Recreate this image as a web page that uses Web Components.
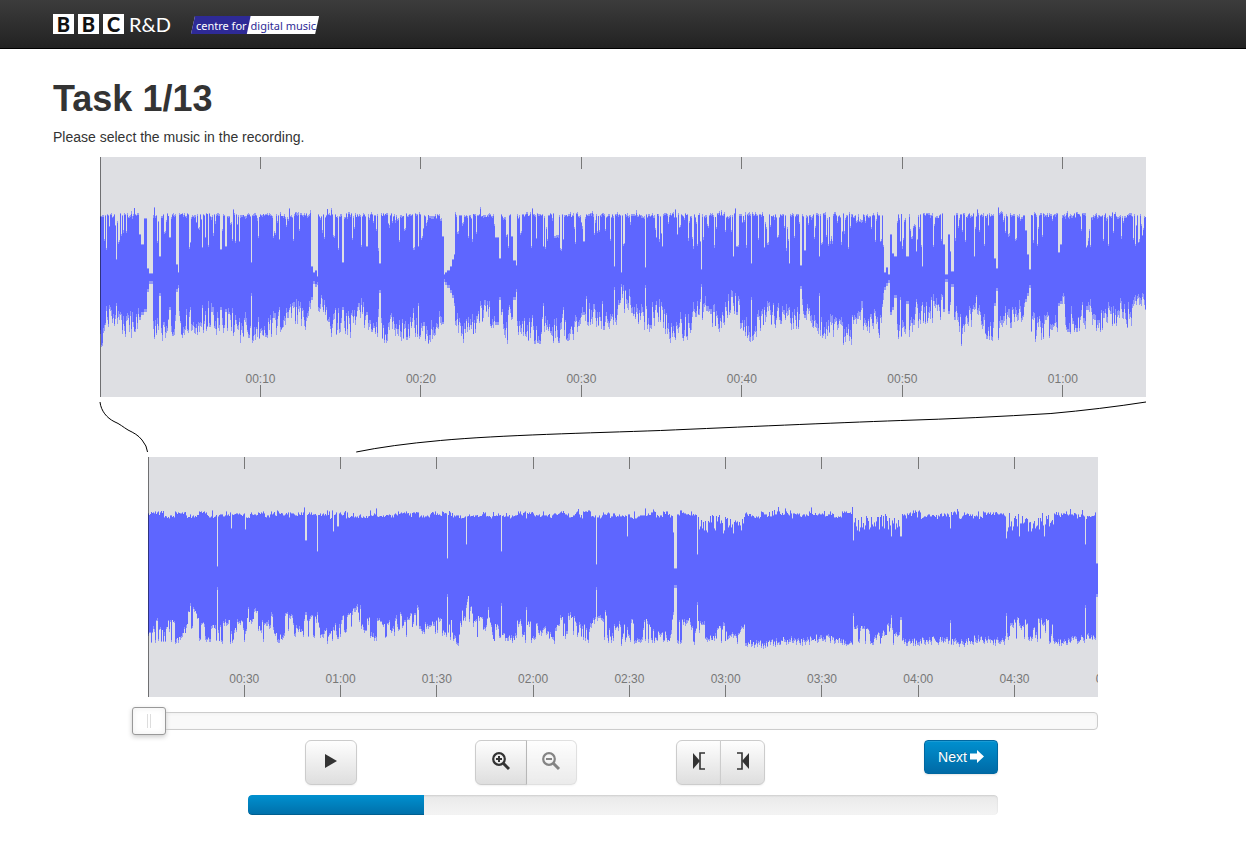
<!DOCTYPE html>
<html lang="en">
<head>
<meta charset="utf-8">
<title>Task 1/13</title>
<meta name="viewport" content="width=device-width, initial-scale=1">
<style>
  body { margin: 0; background: #fff; color: #333; font: 14px/20px "Liberation Sans", Arial, sans-serif; }
</style>
</head>
<body>
<task-page></task-page>

<template id="tpl-page">
  <style>
    :host { display: block; }
    main { max-width: 1140px; margin: 0 auto; padding: 30px 16px 0; }
    h1 { margin: 0; font-size: 36px; line-height: 40px; font-weight: bold; color: #333; }
    p { margin: 8px 0 10px; color: #333; }
    .zoomed { display: block; max-width: 1046px; margin: 0 auto; }
    .whole { display: block; max-width: 950px; margin: 0 auto; }
    .panel { max-width: 750px; margin: 10px auto 0; }
  </style>
  <site-bar></site-bar>
  <main>
    <h1>Task 1/13</h1>
    <p>Please select the music in the recording.</p>
    <div class="zoomed">
      <wave-view kind="zoomed" span="65.18" step="10" label="Zoomed waveform"></wave-view>
      <zoom-link></zoom-link>
    </div>
    <div class="whole">
      <wave-view kind="whole" span="296" step="30" label="Whole recording"></wave-view>
      <scroll-slider></scroll-slider>
    </div>
    <div class="panel">
      <player-controls></player-controls>
      <task-progress value="176" max="750"></task-progress>
    </div>
  </main>
</template>

<template id="tpl-bar">
  <style>
    :host { display: block; background: linear-gradient(#3c3c3c, #222); border-bottom: 1px solid #000; }
    nav { display: flex; align-items: flex-start; gap: 20px; max-width: 1140px; height: 48px; margin: 0 auto; padding: 0 16px; }
    a { text-decoration: none; display: flex; }
    .bbc { gap: 4px; margin-top: 14px; color: #fff; }
    .bbc b { width: 21px; height: 20px; background: #fff; color: #111; font: 900 20px/20px Lato, sans-serif; text-align: center; }
    .bbc span { margin-left: 1px; font: 20px/20px Lato, sans-serif; }
    .cdm { margin-top: 16px; font: 11px/18px "Noto Sans", sans-serif; height: 18px;
      clip-path: polygon(4px 0, 100% 0, calc(100% - 4px) 100%, 0 100%); background: #fff; }
    .cdm span { color: #fff; background: #2e2a96; padding: 1px 4px 0 5px; height: 18px;
      clip-path: polygon(0 0, 100% 0, calc(100% - 4px) 100%, 0 100%); white-space: nowrap; }
    .cdm i { font-style: normal; color: #2e2a96; padding: 1px 3px 0 0; white-space: nowrap; }
  </style>
  <nav>
    <a class="bbc" href="#"><b>B</b><b>B</b><b>C</b><span>R&amp;D</span></a>
    <a class="cdm" href="#"><span>centre for</span><i>digital music</i></a>
  </nav>
</template>

<template id="tpl-wave">
  <style>
    :host { display: grid; height: 240px; background: #dedfe3; overflow: hidden; }
    svg, .scale { grid-area: 1 / 1; width: 100%; height: 240px; min-width: 0; display: block; }
    .scale { display: flex; box-sizing: border-box; }
    .mark { flex: none; display: flex; flex-direction: column; justify-content: space-between; align-items: center;
      font-size: 12px; line-height: 12px; color: #777; }
    .mark::before, .foot::after { content: ""; width: 1px; height: 12px; background: #777; }
    .foot { display: flex; flex-direction: column; align-items: center; }
  </style>
  <svg viewBox="0 0 100 240" preserveAspectRatio="none" role="img">
    <path class="soft" fill="#9299f7"></path>
    <path class="solid" fill="#5e66ff"></path>
    <path class="head" d="M0 0H1V240H0z" fill="#000" fill-opacity=".5"></path>
  </svg>
  <div class="scale"></div>
</template>

<template id="tpl-link">
  <style>
    :host { display: block; padding: 5px 0; }
    svg { display: block; width: 100%; height: 50px; overflow: visible; }
    path { fill: none; stroke: #000; vector-effect: non-scaling-stroke; }
  </style>
  <svg viewBox="0 0 1045 50" preserveAspectRatio="none" aria-hidden="true">
    <path d="M0 0C1 9 7 16 14 19.500C20 22 23 25 28 28C34 31 38 33 42 38Q47 44 47.500 50"/>
    <path d="M256 50Q290 43 340 38.500C400 33 490 31 560 28.500C640 25 730 21 800 18.500C850 17 900 14.500 950 11.500Q1000 7 1045 0"/>
  </svg>
</template>

<template id="tpl-slider">
  <style>
    :host { display: block; box-sizing: border-box; height: 18px; margin-top: 15px; background: #f9f9f9;
      border: 1px solid #ccc; border-radius: 4px; box-shadow: inset 0 1px 3px #f0f0f0; }
    input { -webkit-appearance: none; appearance: none; display: block; box-sizing: border-box;
      width: calc(100% + 34px); height: 28px; margin: -6px -17px; background: none; }
    input::-webkit-slider-runnable-track { height: 28px; background: none; }
    input::-webkit-slider-thumb { -webkit-appearance: none; box-sizing: border-box; width: 34px; height: 28px;
      border: 1px solid #999; border-radius: 3px;
      background:
        linear-gradient(#ddd, #ddd) 14px 6px / 1px 14px no-repeat,
        linear-gradient(#ddd, #ddd) 17px 6px / 1px 14px no-repeat, #fff;
      box-shadow: 0 2px 5px #ccc, inset 0 0 6px #eee; }
  </style>
  <input type="range" min="0" max="100" value="0" aria-label="Scroll position">
</template>

<template id="tpl-controls">
  <style>
    :host { display: grid; grid-template-columns: repeat(4, 1fr); column-gap: 30px; align-items: start; justify-items: center; }
    .group { display: flex; }
    button { box-sizing: border-box; margin: 0; height: 45px; padding: 0 0 3px; display: flex; align-items: center; justify-content: center;
      border: 1px solid #ccc; border-radius: 6px; background: linear-gradient(#fefefe, #dedede); color: #333;
      box-shadow: 0 1px 2px rgba(0,0,0,.06); font: inherit; }
    button svg { display: block; }
    .wide { width: 52px; }
    .slim { width: 45px; }
    .group button:first-child { border-radius: 6px 0 0 6px; }
    .group button:last-child { border-radius: 0 6px 6px 0; margin-left: -1px; }
    button:disabled { opacity: .6; border-left-color: #aaa; width: 51px; }
    .next { justify-self: end; width: 74px; height: 34px; padding: 0; gap: 3px; color: #fff; border-color: #0067a0; border-radius: 4px;
      background: linear-gradient(#0090cf, #006aa6); box-shadow: inset 0 1px #1a9bd4, 0 1px 2px rgba(0,0,0,.1);
      text-shadow: 0 -1px rgba(0,0,0,.25); }
  </style>
  <button class="wide" aria-label="Play"><svg width="12" height="14" viewBox="0 0 12 14"><path d="M0 0L12 7L0 14z" fill="#333"/></svg></button>
  <div class="group">
    <button class="wide" aria-label="Zoom in"><svg width="20" height="20" viewBox="0 0 20 20" fill="none" stroke="#333">
      <circle cx="8" cy="8" r="5.800" stroke-width="2.200"/><path d="M5 8H11M8 5V11" stroke-width="2"/><path d="M12.500 12.500L18 18" stroke-width="3"/></svg></button>
    <button class="wide" disabled aria-label="Zoom out"><svg width="20" height="20" viewBox="0 0 20 20" fill="none" stroke="#333">
      <circle cx="8" cy="8" r="5.800" stroke-width="2.200"/><path d="M5 8H11" stroke-width="2"/><path d="M12.500 12.500L18 18" stroke-width="3"/></svg></button>
  </div>
  <div class="group">
    <button class="slim" aria-label="Mark start"><svg width="12" height="18" viewBox="0 0 12 18"><path d="M0 1L7 9L0 17z" fill="#333"/><path d="M12 1H7V17H12" fill="none" stroke="#333" stroke-width="1.600"/></svg></button>
    <button class="slim" aria-label="Mark end"><svg width="12" height="18" viewBox="0 0 12 18"><path d="M12 1L5 9L12 17z" fill="#333"/><path d="M0 1H5V17H0" fill="none" stroke="#333" stroke-width="1.600"/></svg></button>
  </div>
  <button class="next">Next<svg width="14" height="14" viewBox="0 0 14 14" aria-hidden="true"><path d="M0 3.500H7V0L14 6.500L7 13V9.500H0z" fill="#fff"/></svg></button>
</template>

<template id="tpl-progress">
  <style>
    :host { display: block; margin-top: 10px; }
    progress { -webkit-appearance: none; appearance: none; display: block; width: 100%; height: 20px; border: 0;
      border-radius: 4px; overflow: hidden; }
    progress::-webkit-progress-bar { background: linear-gradient(#e9e9e9, #f4f4f4); border-radius: 4px; box-shadow: inset 0 1px 2px rgba(0,0,0,.12); }
    progress::-webkit-progress-value { background: linear-gradient(#0090cf, #006fa9); box-shadow: inset 0 -1px rgba(0,0,0,.15); border-radius: 4px 0 0 4px; }
  </style>
  <progress aria-label="Tasks completed"></progress>
</template>

<script>
// Signal outlines. "gaps" are quiet stretches: [start, end, top, bottom];
// "low" is the reach of the negative peaks as x, y pairs; "rough" lists stretches with uneven crests.
const SIGNALS = {
  zoomed: {
    width: 1046, seed: 7, depth: 28, crest: 36,
    gaps: [[16,17,103,146],[39,41,78,160],[41,44,88,155],[44,47,62,152],[47,49,112,132],[49,53,117,124],[59,61,100,136],[69,71,81,150],[76,78,108,132],[78,79,116,128],
      [90,91,86,150],[102,103,91,148],[120,122,93,150],[125,127,90,152],[151,152,106,136],[179,180,83,150],[211,213,110,140],[213,215,116,124],[215,217,114,127],[217,218,120,125],
      [242,244,106,150],[266,268,90,155],[279,281,107,133],[318,319,90,146],[342,344,80,165],[344,345,118,122],[345,347,116,125],[347,350,114,128],[350,352,110,133],[352,354,103,138],[354,355,98,146],
      [395,399,81,165],[399,401,102,140],[411,413,80,160],[413,416,104,140],[416,417,109,132],[443,444,90,146],[463,464,83,150],[483,485,85,155],[514,515,110,130],[521,522,116,127],
      [545,546,111,128],[562,563,90,150],[601,602,113,127],[633,634,100,146],[636,638,90,155],[651,652,107,140],[664,665,91,150],[689,690,107,150],[700,702,109,129],[704,706,94,158],
      [719,720,100,136],[784,786,116,130],[786,788,111,126],[788,790,118,123],[790,792,78,155],[792,794,97,150],[794,797,100,138],[800,801,85,140],[806,809,100,144],[816,817,95,142],[822,823,110,145],
      [843,845,88,152],[845,848,118,122],[848,850,78,154],[850,851,95,145],[851,854,115,127],[874,875,100,150],[894,896,102,146],[896,898,112,131],[925,927,74,142],[927,929,98,136],[929,931,113,128],[958,960,96,146],[960,962,88,144]],
    low: [0,190,4,184,8,168,20,178,30,180,40,170,46,160,55,186,65,185,75,175,80,181,90,172,100,178,110,168,118,178,130,170,137,187,147,178,152,184,165,180,180,174,190,163,205,174,210,150,220,157,230,178,250,180,258,165,270,172,283,184,300,183,316,178,328,186,342,165,355,166,362,184,372,180,380,165,402,174,407,185,412,160,418,184,445,185,460,184,477,180,482,165,502,170,512,177,520,155,530,152,545,177,560,165,570,184,588,181,600,160,620,174,632,150,640,170,652,186,662,170,683,168,693,175,704,168,720,178,745,187,755,185,758,167,770,177,780,180,785,150,797,182,807,180,820,168,843,160,855,172,861,187,877,160,886,180,897,183,905,165,915,174,925,155,932,178,937,186,956,175,962,160,968,176,990,168,1000,174,1020,165,1027,172,1045,154],
    rough: []
  },
  whole: {
    width: 950, seed: 23, depth: 25, crest: 3,
    gaps: [[42,43,58,146],[69,70,110,130],[83,84,72,174],[97,98,73,174],[106,107,58,152],[157,159,84,155],[169,170,95,155],[185,186,75,170],[189,191,70,180],[299,300,102,137],[318,319,88,148],
      [340,341,60,150],[353,354,95,146],[378,379,62,150],[448,449,108,130],[479,480,80,170],[525,526,76,155],[526,529,112,128],[549,550,98,145],[705,706,84,156],[743,744,80,158],[752,754,80,160],
      [802,803,72,163],[858,859,82,156],[871,872,80,166],[896,897,80,165],[937,938,88,148],[948,950,107,137]],
    low: [0,190,5,184,30,186,42,170,50,182,68,185,95,186,103,165,115,184,125,174,130,186,140,174,150,187,165,178,171,188,190,180,210,166,220,180,242,187,250,174,256,182,270,168,276,185,290,174,310,187,316,162,322,164,325,187,340,168,344,188,365,185,405,186,425,176,440,184,448,174,455,176,456,195,457,178,460,184,477,188,490,184,525,184,532,185,560,187,580,184,600,188,620,190,645,184,651,188,675,182,698,189,715,185,750,188,780,186,818,188,830,184,850,187,870,182,890,183,907,188,936,184,947,182],
    rough: [[549,597],[705,753],[858,906]]
  }
};

// Small repeatable generator, so a recording always shows the same shape.
const random = seed => () => {
  seed = (seed * 1664525 + 1013904223) >>> 0;
  return seed / 4294967296;
};

const levelAt = (pairs, x) => {
  let i = 0;
  while (i + 2 < pairs.length - 2 && pairs[i + 2] < x) i += 2;
  const t = Math.min(1, Math.max(0, (x - pairs[i]) / (pairs[i + 2] - pairs[i])));
  return pairs[i + 1] + t * (pairs[i + 3] - pairs[i + 1]);
};

function outline(signal) {
  const next = random(signal.seed);
  const zoomed = signal.crest > 10;
  let solid = '', soft = '', swell = 0, dip = 0, crestLift = 0;
  for (let x = 0; x < signal.width; x++) {
    const a = next(), b = next(), c = next(), d = next();
    const rough = signal.rough.some(r => x >= r[0] && x < r[1]);
    const busy = zoomed || x < 590 || rough;
    if (b < .4) swell = d;
    if (c < .8) dip = a > .6 ? d * d * signal.crest : b * 4;
    if (d < .25) crestLift = a * 5 - 2;
    let top = 56 + a * 3;
    if (zoomed) top += dip;
    else top += crestLift;
    if (rough) top += c * 18;
    if (b < .03) top -= 5;
    const reach = levelAt(signal.low, x);
    const spread = zoomed ? .35 * swell + .65 * d : .8 * swell + .2 * d;
    let bottom = reach - (busy ? signal.depth * spread * (a > .12 ? 1 : .1) : d * 7);
    let edge = zoomed ? (a + c) * 5 : c * 4;
    for (const g of signal.gaps) if (x >= g[0] && x < g[1]) { top = g[2]; bottom = g[3]; edge = 3; }
    top = Math.round(top); bottom = Math.round(bottom);
    solid += `M${x} ${top}h1V${bottom}h-1z`;
    soft += `M${x} ${top - Math.round(edge / 3)}h1V${Math.round(Math.min(bottom + edge, reach + 2))}h-1z`;
  }
  return { solid, soft };
}

class Templated extends HTMLElement {
  constructor() {
    super();
    this.attachShadow({ mode: 'open' })
      .append(document.getElementById(this.constructor.template).content.cloneNode(true));
  }
}

class SiteBar extends Templated { static template = 'tpl-bar'; }
class ZoomLink extends Templated { static template = 'tpl-link'; }
class ScrollSlider extends Templated { static template = 'tpl-slider'; }
class PlayerControls extends Templated { static template = 'tpl-controls'; }

class TaskProgress extends Templated {
  static template = 'tpl-progress';
  connectedCallback() {
    const bar = this.shadowRoot.querySelector('progress');
    bar.max = Number(this.getAttribute('max'));
    bar.value = Number(this.getAttribute('value'));
  }
}

class WaveView extends Templated {
  static template = 'tpl-wave';
  connectedCallback() {
    const root = this.shadowRoot;
    const signal = SIGNALS[this.getAttribute('kind')];
    const svg = root.querySelector('svg');
    svg.setAttribute('viewBox', `0 0 ${signal.width} 240`);
    svg.setAttribute('aria-label', this.getAttribute('label'));
    svg.setAttribute('shape-rendering', 'crispEdges');
    const shape = outline(signal);
    root.querySelector('.solid').setAttribute('d', shape.solid);
    root.querySelector('.soft').setAttribute('d', shape.soft);

    // Each mark is one step wide and centred on its time; the row starts half a step in.
    const span = Number(this.getAttribute('span')), step = Number(this.getAttribute('step'));
    const scale = root.querySelector('.scale');
    scale.style.paddingLeft = step / span * 50 + '%';
    scale.style.width = 100 + step / span * 50 + '%';
    const track = document.createElement('div');
    track.style.cssText = 'display:flex;width:100%';
    // A label that starts inside the view is kept even when its centre is just past the end.
    for (let s = step; s < span + step * .15; s += step) {
      const mark = document.createElement('div');
      mark.className = 'mark';
      mark.style.width = step / span * 100 + '%';
      const foot = document.createElement('div');
      foot.className = 'foot';
      const text = document.createElement('span');
      text.textContent = [Math.floor(s / 60), s % 60].map(n => String(n).padStart(2, '0')).join(':');
      foot.append(text);
      mark.append(foot);
      track.append(mark);
    }
    scale.replaceChildren(track);
  }
}

class TaskPage extends Templated { static template = 'tpl-page'; }

customElements.define('site-bar', SiteBar);
customElements.define('zoom-link', ZoomLink);
customElements.define('scroll-slider', ScrollSlider);
customElements.define('player-controls', PlayerControls);
customElements.define('task-progress', TaskProgress);
customElements.define('wave-view', WaveView);
customElements.define('task-page', TaskPage);
</script>
</body>
</html>
